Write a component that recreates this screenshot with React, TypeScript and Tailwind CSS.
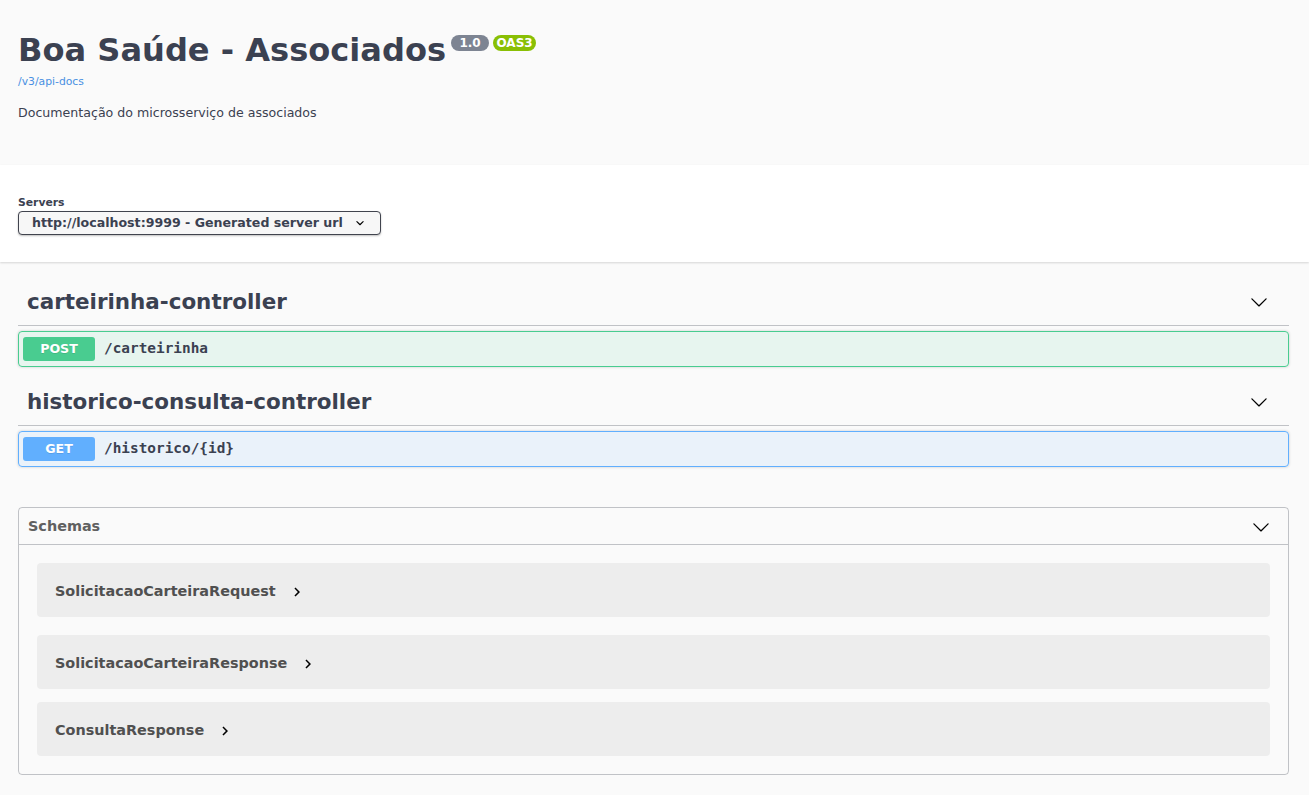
import React from 'react';

const ArrowDown = ({ className = '' }: { className?: string }) => (
  <svg viewBox="0 0 20 20" className={className} fill="currentColor" aria-hidden="true">
    <path d="M17.418 6.109c.272-.268.709-.268.979 0s.271.701 0 .969l-7.908 7.83c-.27.268-.707.268-.979 0l-7.908-7.83c-.27-.268-.27-.701 0-.969.271-.268.709-.268.979 0L10 13.25l7.418-7.141z" />
  </svg>
);

const SelectArrow = () => (
  <svg viewBox="0 0 20 20" className="w-[16px] h-[16px] text-[#000]" fill="currentColor" aria-hidden="true">
    <path d="M13.418 7.859a.695.695 0 0 1 .978 0 .68.68 0 0 1 0 .969l-3.908 3.83a.697.697 0 0 1-.979 0l-3.908-3.83a.68.68 0 0 1 0-.969.695.695 0 0 1 .978 0L10 11l3.418-3.141z" />
  </svg>
);

const ModelToggle = () => (
  <svg viewBox="0 0 24 24" className="w-[18px] h-[18px] text-[#000]" fill="currentColor" aria-hidden="true">
    <path d="M10 6 8.59 7.41 13.17 12l-4.58 4.59L10 18l6-6z" />
  </svg>
);

const App = () => {
  const tags = [
    {
      name: 'carteirinha-controller',
      method: 'POST',
      path: '/carteirinha',
      block: 'border-[#49cc90] bg-[#49cc90]/10',
      badge: 'bg-[#49cc90]',
      spacing: 'mt-[18px]'
    },
    {
      name: 'historico-consulta-controller',
      method: 'GET',
      path: '/historico/{id}',
      block: 'border-[#61affe] bg-[#61affe]/10',
      badge: 'bg-[#61affe]',
      spacing: 'mt-[13px]'
    }
  ];

  const schemas = [
    { name: 'SolicitacaoCarteiraRequest', spacing: 'mt-[18px]' },
    { name: 'SolicitacaoCarteiraResponse', spacing: 'mt-[18px]' },
    { name: 'ConsultaResponse', spacing: 'mt-[13px]' }
  ];

  return (
    <div className="min-h-screen bg-[#fafafa] text-[#3b4151] font-['DejaVu_Sans',sans-serif]">
      {/* info */}
      <div className="h-[165px] px-[18px] pt-[31px]">
        <div className="flex items-start">
          <h2 className="text-[32.1px] leading-[38px] font-bold">Boa Saúde - Associados</h2>
          <span className="ml-[5px] mt-[4px] w-[38px] h-[16px] rounded-full bg-[#7d8492] text-white text-[12px] leading-[16px] font-bold text-center">
            1.0
          </span>
          <span className="ml-[4px] mt-[4px] w-[43px] h-[16px] rounded-full bg-[#89bf04] text-white text-[12px] leading-[16px] font-bold text-center">
            OAS3
          </span>
        </div>
        <a className="block mt-[6px] text-[10.8px] leading-[14px] text-[#4990e2]">/v3/api-docs</a>
        <p className="mt-[15px] text-[12.6px] leading-[18px]">Documentação do microsserviço de associados</p>
      </div>

      {/* servers */}
      <div className="h-[97px] bg-white shadow-[0_1px_2px_0_rgba(0,0,0,0.15)] px-[18px] pt-[31px]">
        <div className="text-[10.8px] leading-[14px] font-bold">Servers</div>
        <div className="mt-[1px] w-[363px] h-[24px] flex items-center justify-between rounded-[4px] border border-[#41444e] bg-[#f7f7f7] shadow-[0_1px_2px_0_rgba(0,0,0,0.25)] pl-[13px] pr-[12px]">
          <span className="text-[12.6px] font-bold">http://localhost:9999 - Generated server url</span>
          <SelectArrow />
        </div>
      </div>

      {/* operations */}
      <div className="pl-[18px] pr-[20px]">
        {tags.map((tag) => (
          <div key={tag.name} className={tag.spacing}>
            <div className="flex items-center justify-between border-b border-[#3b4151]/30 pl-[9px] pr-[21px] pt-[9px] pb-[11px]">
              <h3 className="text-[21.45px] leading-[25px] font-bold">{tag.name}</h3>
              <ArrowDown className="w-[18px] h-[18px] text-[#000]" />
            </div>
            <div className={`mt-[5px] h-[36px] flex items-center rounded-[4px] border px-[4px] shadow-[0_0_3px_rgba(0,0,0,0.19)] ${tag.block}`}>
              <span className={`w-[72px] h-[24px] flex items-center justify-center rounded-[3px] text-white text-[12.6px] font-bold [text-shadow:0_1px_0_rgba(0,0,0,0.1)] ${tag.badge}`}>
                {tag.method}
              </span>
              <span className="ml-[9px] font-['DejaVu_Sans_Mono',monospace] text-[14.4px] font-bold">{tag.path}</span>
            </div>
          </div>
        ))}

        {/* schemas */}
        <div className="mt-[40px] rounded-[4px] border border-[#3b4151]/30 pb-[18px]">
          <div className="h-[37px] flex items-center justify-between border-b border-[#3b4151]/30 pl-[9px] pr-[18px] pt-[1px]">
            <h4 className="text-[14.4px] font-bold text-[#606060]">Schemas</h4>
            <ArrowDown className="w-[18px] h-[18px] text-[#000]" />
          </div>
          {schemas.map((schema) => (
            <div key={schema.name} className={`mx-[18px] h-[54px] flex items-center rounded-[4px] bg-black/5 px-[18px] pt-[3px] ${schema.spacing}`}>
              <span className="text-[14.4px] font-bold text-[#505050]">{schema.name}</span>
              <span className="ml-[12px]">
                <ModelToggle />
              </span>
            </div>
          ))}
        </div>
      </div>
    </div>
  );
};

export default App;
